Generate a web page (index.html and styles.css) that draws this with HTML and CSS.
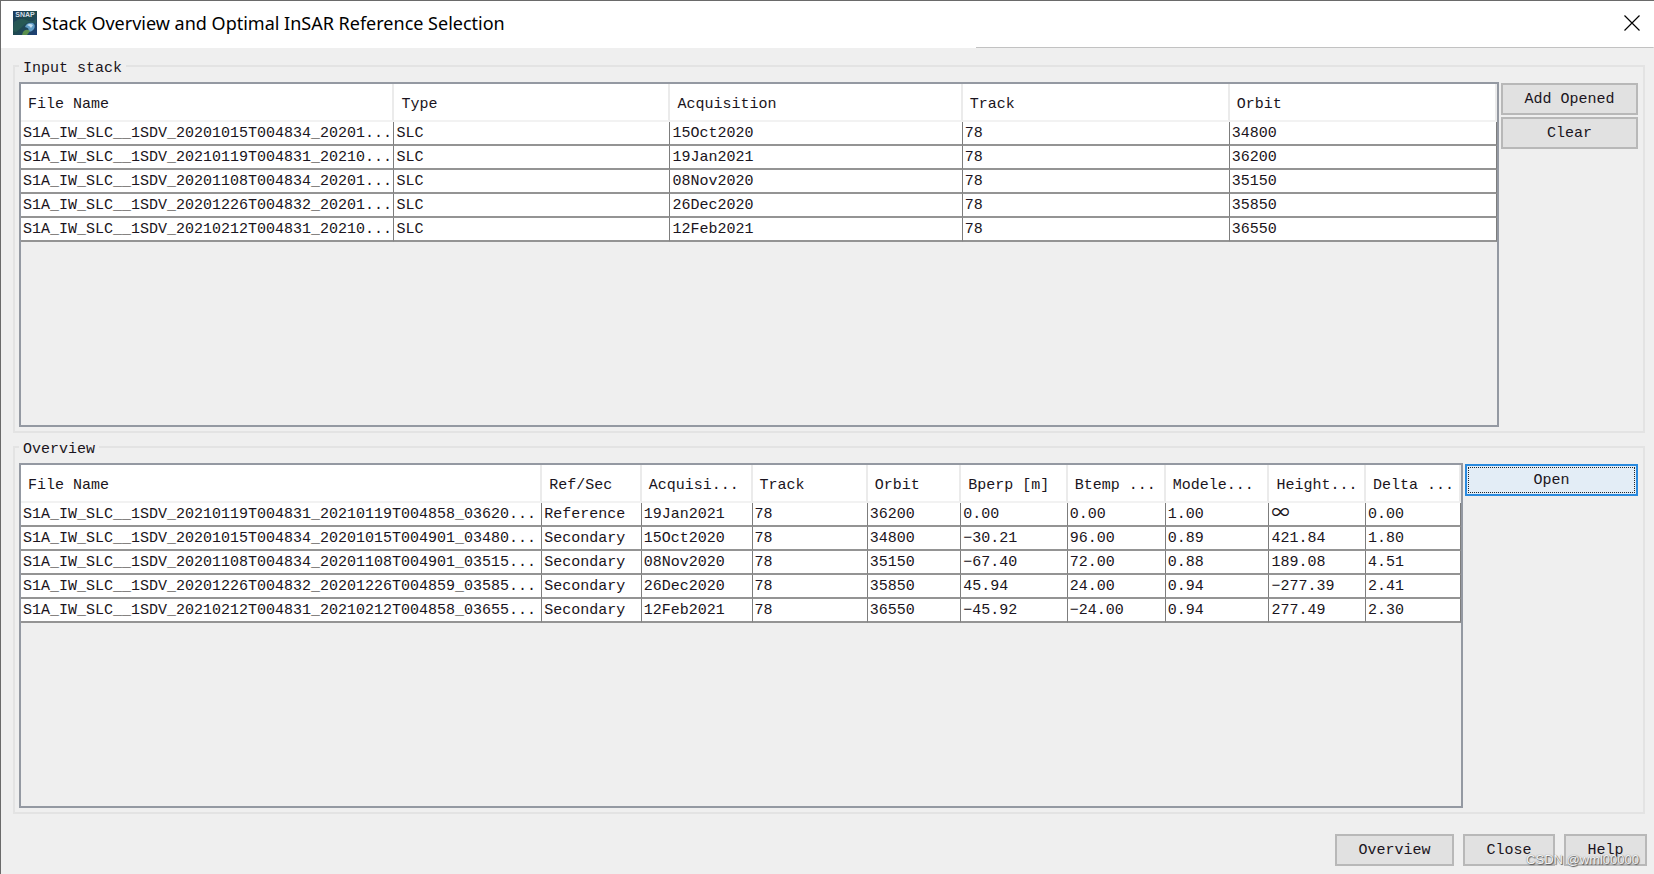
FILE: index.html
```html
<!DOCTYPE html>
<html lang="en">
<head>
<meta charset="utf-8">
<title>Stack Overview and Optimal InSAR Reference Selection</title>
<link rel="stylesheet" href="styles.css">
</head>
<body>
<div class="window">
  <header class="titlebar">
    <svg class="logo" viewBox="0 0 24 24" aria-hidden="true">
      <defs>
        <linearGradient id="sky" x1="0" y1="0" x2="1" y2="1">
          <stop offset="0" stop-color="#1b3a5e"/>
          <stop offset="0.45" stop-color="#1f4a4c"/>
          <stop offset="1" stop-color="#1d3f78"/>
        </linearGradient>
      </defs>
      <rect width="24" height="24" fill="url(#sky)"/>
      <path d="M1 11 Q7 6 13 9 T23 8 V13 Q16 9 11 14 T3 21 L0 20Z" fill="#2f6a5c" opacity=".5"/>
      <path d="M12 16 Q14 11 20 12 Q23 14 21 18 Q18 22 15 20 Q17 17 12 16Z" fill="#5f9cc4"/>
      <path d="M14 14 Q17 12 20 14 L18 17 Q17 15 14 14Z" fill="#c5dff0"/>
      <path d="M10 21 Q13 17 17 20 L14 24 H9Z" fill="#5a8f4c"/>
      <text class="logo-text" x="12" y="6" text-anchor="middle">SNAP</text>
    </svg>
    <h1 class="title">Stack Overview and Optimal InSAR Reference Selection</h1>
    <button class="close" type="button" aria-label="Close window">
      <svg class="close-icon" viewBox="0 0 16 16" aria-hidden="true"><path d="M0.5 0.5L15.5 15.5M15.5 0.5L0.5 15.5" fill="none" stroke="#000" stroke-width="1.2"/></svg>
    </button>
  </header>
  <main class="content">
    <section class="group" aria-labelledby="input-heading">
      <h2 class="legend" id="input-heading">Input stack</h2>
      <div class="group-body">
        <div class="pane">
          <table class="grid">
            <colgroup><col class="s-file"><col class="s-type"><col class="s-acq"><col class="s-track"><col></colgroup>
            <thead><tr><th>File Name</th><th>Type</th><th>Acquisition</th><th>Track</th><th>Orbit</th></tr></thead>
            <tbody>
              <tr><td>S1A_IW_SLC__1SDV_20201015T004834_20201...</td><td>SLC</td><td>15Oct2020</td><td>78</td><td>34800</td></tr>
              <tr><td>S1A_IW_SLC__1SDV_20210119T004831_20210...</td><td>SLC</td><td>19Jan2021</td><td>78</td><td>36200</td></tr>
              <tr><td>S1A_IW_SLC__1SDV_20201108T004834_20201...</td><td>SLC</td><td>08Nov2020</td><td>78</td><td>35150</td></tr>
              <tr><td>S1A_IW_SLC__1SDV_20201226T004832_20201...</td><td>SLC</td><td>26Dec2020</td><td>78</td><td>35850</td></tr>
              <tr><td>S1A_IW_SLC__1SDV_20210212T004831_20210...</td><td>SLC</td><td>12Feb2021</td><td>78</td><td>36550</td></tr>
            </tbody>
          </table>
        </div>
        <div class="side side-narrow">
          <button class="btn" type="button">Add Opened</button>
          <button class="btn" type="button">Clear</button>
        </div>
      </div>
    </section>
    <section class="group" aria-labelledby="overview-heading">
      <h2 class="legend" id="overview-heading">Overview</h2>
      <div class="group-body">
        <div class="pane">
          <table class="grid">
            <colgroup><col class="o-file"><col class="o-ref"><col class="o-acq"><col class="o-track"><col class="o-orbit"><col class="o-bperp"><col class="o-btemp"><col class="o-model"><col class="o-height"><col></colgroup>
            <thead><tr><th>File Name</th><th>Ref/Sec</th><th>Acquisi...</th><th>Track</th><th>Orbit</th><th>Bperp [m]</th><th>Btemp ...</th><th>Modele...</th><th>Height...</th><th>Delta ...</th></tr></thead>
            <tbody>
              <tr><td>S1A_IW_SLC__1SDV_20210119T004831_20210119T004858_03620...</td><td>Reference</td><td>19Jan2021</td><td>78</td><td>36200</td><td>0.00</td><td>0.00</td><td>1.00</td><td class="infinite">∞</td><td>0.00</td></tr>
              <tr><td>S1A_IW_SLC__1SDV_20201015T004834_20201015T004901_03480...</td><td>Secondary</td><td>15Oct2020</td><td>78</td><td>34800</td><td>−30.21</td><td>96.00</td><td>0.89</td><td>421.84</td><td>1.80</td></tr>
              <tr><td>S1A_IW_SLC__1SDV_20201108T004834_20201108T004901_03515...</td><td>Secondary</td><td>08Nov2020</td><td>78</td><td>35150</td><td>−67.40</td><td>72.00</td><td>0.88</td><td>189.08</td><td>4.51</td></tr>
              <tr><td>S1A_IW_SLC__1SDV_20201226T004832_20201226T004859_03585...</td><td>Secondary</td><td>26Dec2020</td><td>78</td><td>35850</td><td>45.94</td><td>24.00</td><td>0.94</td><td>−277.39</td><td>2.41</td></tr>
              <tr><td>S1A_IW_SLC__1SDV_20210212T004831_20210212T004858_03655...</td><td>Secondary</td><td>12Feb2021</td><td>78</td><td>36550</td><td>−45.92</td><td>−24.00</td><td>0.94</td><td>277.49</td><td>2.30</td></tr>
            </tbody>
          </table>
        </div>
        <div class="side side-wide">
          <button class="btn btn-focused" type="button">Open</button>
        </div>
      </div>
    </section>
  </main>
  <footer class="actions">
    <button class="btn btn-overview" type="button">Overview</button>
    <button class="btn btn-close" type="button">Close</button>
    <button class="btn btn-help" type="button">Help</button>
  </footer>
  <span class="watermark">CSDN @wml00000</span>
</div>
</body>
</html>
```
FILE: styles.css
```css
* { box-sizing: border-box; }

body {
  margin: 0;
  font: 15px/20px "Liberation Mono", monospace;
  color: #1a1420;
}

.window {
  position: relative;
  display: flex;
  flex-direction: column;
  min-height: 100vh;
  background: #efefef;
  border-top: 1px solid #6a6a6a;
  border-left: 1px solid #6a6a6a;
}

.titlebar {
  display: flex;
  align-items: center;
  height: 47px;
  padding: 0 14px 3px 12px;
  background: linear-gradient(#c2c2c2, #c2c2c2) right bottom / 41% 1px no-repeat, #fff;
}

.logo { width: 24px; height: 24px; }
.logo-text { font: bold 7px "Liberation Sans", sans-serif; fill: #d3dde6; }

.title {
  flex: 1;
  margin: 0 0 0 5px;
  font: 18px/28px "Noto Sans", sans-serif;
  color: #000;
  white-space: nowrap;
}

.close {
  display: flex;
  padding: 0;
  border: 0;
  background: none;
}
.close-icon { width: 16px; height: 16px; }

.content {
  flex: 1;
  display: flex;
  flex-direction: column;
  gap: 13px;
  padding: 17px 9px 0 12px;
}

.group {
  flex: 1;
  display: flex;
  flex-direction: column;
  min-width: 0;
  padding: 0 5px 4px 4px;
  border: 2px solid #e3e3e3;
}

.legend {
  align-self: flex-start;
  margin: -11px 0 2px;
  padding: 2px 4px 0;
  background: #efefef;
  font: inherit;
  line-height: 22px;
}

.group-body {
  flex: 1;
  display: flex;
  gap: 2px;
}

.pane {
  flex: 1;
  min-width: 0;
  border: 2px solid #9499a2;
}

.grid {
  width: 100%;
  table-layout: fixed;
  border-collapse: separate;
  border-spacing: 0;
  background: #fff;
}
.grid th,
.grid td {
  overflow: hidden;
  text-align: left;
  font-weight: normal;
  white-space: nowrap;
}
.grid th {
  height: 38px;
  padding: 6px 0 0 7px;
  border-right: 2px solid #ebebeb;
  border-bottom: 2px solid #f2f2f2;
}
.grid td {
  height: 24px;
  padding: 2px 0 0 2px;
  line-height: 20px;
  border-right: 1px solid #7d7d7d;
  border-bottom: 2px solid #949494;
}
.grid .infinite {
  padding: 0 0 0 2px;
  font-family: "Noto Sans CJK SC", sans-serif;
  font-size: 18px;
  line-height: 16px;
  vertical-align: top;
}

.s-file { width: 25.3%; }
.s-type { width: 18.7%; }
.s-acq { width: 19.8%; }
.s-track { width: 18.1%; }

.o-file { width: 36.2%; }
.o-ref { width: 6.9%; }
.o-acq { width: 7.7%; }
.o-track { width: 8%; }
.o-orbit { width: 6.5%; }
.o-bperp { width: 7.4%; }
.o-btemp { width: 6.8%; }
.o-model { width: 7.2%; }
.o-height { width: 6.7%; }

.side {
  display: flex;
  flex-direction: column;
  gap: 2px;
  padding-top: 1px;
}
.side-narrow { width: 137px; }
.side-wide { width: 173px; }

.btn {
  height: 32px;
  padding: 2px 0 0;
  border: 2px solid #b8b8b8;
  border-radius: 0;
  background: #e1e1e1;
  font: inherit;
  color: inherit;
}
.btn-focused {
  border-color: #2a8ade;
  background: #e3edf6;
  outline: 1px dotted #20262c;
  outline-offset: -4px;
}

.actions {
  display: flex;
  justify-content: flex-end;
  gap: 9px;
  padding: 20px 7px 8px;
}
.btn-overview { width: 119px; }
.btn-close { width: 92px; }
.btn-help { width: 83px; }

.watermark {
  position: absolute;
  right: 15px;
  bottom: 5px;
  font: 13px/18px "Liberation Sans", sans-serif;
  color: #f4f4f4;
  text-shadow: 1px 1px 1px #555, 0 0 1px #777;
}
```
